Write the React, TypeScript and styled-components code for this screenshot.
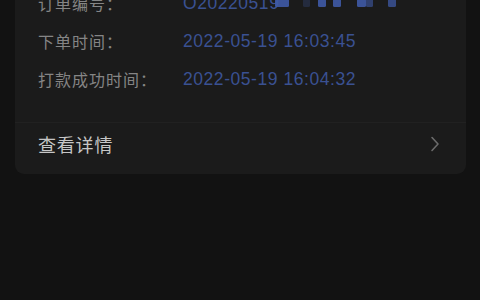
import styled, { createGlobalStyle } from 'styled-components';

const GlobalStyle = createGlobalStyle`
  html, body {
    margin: 0;
    padding: 0;
    background: #121212;
  }
  body {
    width: 480px;
    height: 300px;
    overflow: hidden;
    font-family: "Liberation Sans", "Noto Sans CJK SC", sans-serif;
  }
`;

const Page = styled.div`
  height: 300px;
  background: #121212;
  padding: 0 14px 0 15px;
  overflow: hidden;
`;

const Card = styled.div`
  margin-top: -36px;
  background: #1b1b1b;
  border-radius: 9px;
  padding-top: 20px;
`;

const InfoList = styled.div`
  padding: 0 0 24px 23px;
  border-bottom: 1px solid #212121;
`;

const Row = styled.div`
  height: 38px;
  display: flex;
  align-items: center;
`;

const Label = styled.span`
  width: 145px;
  flex-shrink: 0;
  font-family: "Noto Sans CJK SC", sans-serif;
  font-size: 16px;
  letter-spacing: 1px;
  color: #858585;
`;

const Value = styled.span`
  display: flex;
  align-items: center;
  font-family: "Liberation Sans", Arial, sans-serif;
  font-size: 17.5px;
  letter-spacing: 0.55px;
  color: #3a5192;
`;

const Footer = styled.div`
  height: 51px;
  box-sizing: border-box;
  display: flex;
  align-items: center;
  justify-content: space-between;
  padding: 0 26px 9px 23px;
`;

const FooterText = styled.span`
  font-family: "Noto Sans CJK SC", sans-serif;
  font-size: 18px;
  letter-spacing: 0.8px;
  color: #c6c6c6;
`;

const blocks = [
  { x: 0, w: 14, o: 0.9 },
  { x: 28, w: 7, o: 0.25 },
  { x: 43, w: 8, o: 0.9 },
  { x: 58, w: 8, o: 0.9 },
  { x: 82, w: 9, o: 0.9 },
  { x: 91, w: 7, o: 0.6 },
  { x: 113, w: 8, o: 0.75 },
];

const Mosaic = () => (
  <svg width="124" height="12" viewBox="0 0 124 12" style={{ marginLeft: -4, marginTop: 4 }}>
    {blocks.map((b, i) => (
      <rect key={i} x={b.x} y={0} width={b.w} height={8} rx={1.5} fill="#3f5aa6" opacity={b.o} />
    ))}
  </svg>
);

const Chevron = () => (
  <svg width="10" height="16" viewBox="0 0 10 16" fill="none">
    <path d="M2 1.5 L8 8 L2 14.5" stroke="#6b6b6b" strokeWidth="1.6" strokeLinecap="round" strokeLinejoin="round" />
  </svg>
);

export default function App() {
  return (
    <>
      <GlobalStyle />
      <Page>
        <Card>
          <InfoList>
            <Row>
              <Label>订单编号：</Label>
              <Value>
                O20220519
                <Mosaic />
              </Value>
            </Row>
            <Row>
              <Label>下单时间：</Label>
              <Value>2022-05-19 16:03:45</Value>
            </Row>
            <Row>
              <Label>打款成功时间：</Label>
              <Value>2022-05-19 16:04:32</Value>
            </Row>
          </InfoList>
          <Footer>
            <FooterText>查看详情</FooterText>
            <Chevron />
          </Footer>
        </Card>
      </Page>
    </>
  );
}
